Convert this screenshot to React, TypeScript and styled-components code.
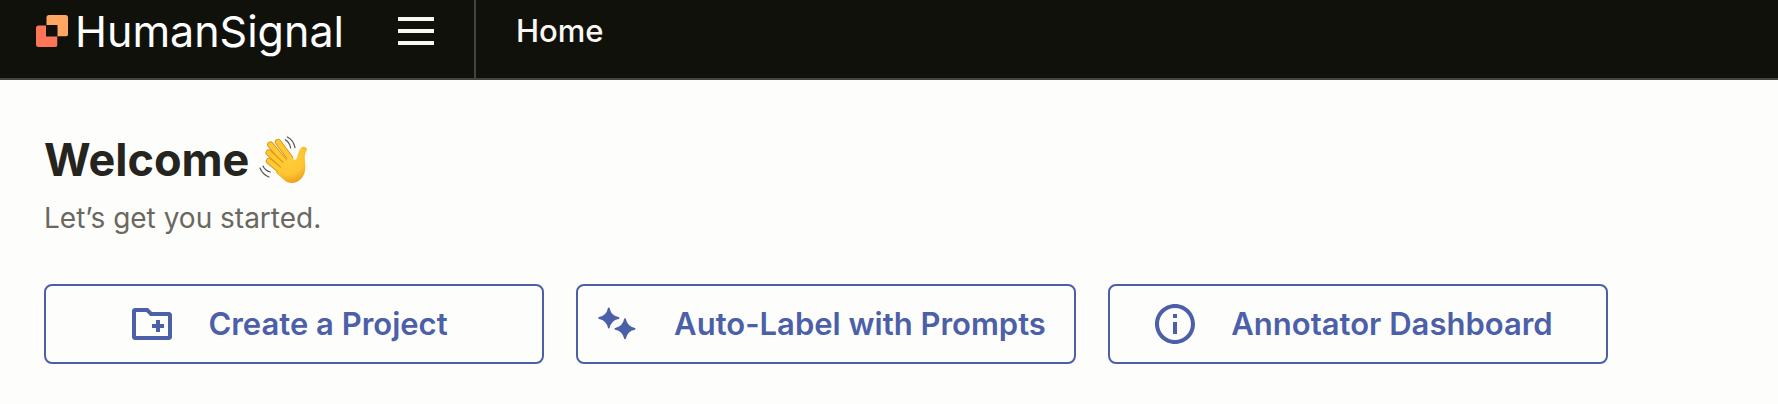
import React from "react";
import styled, { createGlobalStyle } from "styled-components";

const color = {
  ink: "#11110c",
  line: "#44433d",
  paper: "#fdfdfb",
  heading: "#25241f",
  muted: "#6a6860",
  accent: "#4c5fa9",
  light: "#faf8f5",
};

const GlobalStyle = createGlobalStyle`
  *, *::before, *::after { box-sizing: border-box; }
  html { background: ${color.paper}; }
  body {
    margin: 0;
    font-family: Inter, "Liberation Sans", sans-serif;
    -webkit-font-smoothing: antialiased;
  }
`;

const Header = styled.header`
  display: flex;
  align-items: stretch;
  background: ${color.ink};
  border-bottom: 2px solid ${color.line};
  color: ${color.light};
`;

const Brand = styled.div`
  display: flex;
  align-items: center;
  gap: 54px;
  padding: 0 40px 16px 36px;
  border-right: 2px solid ${color.line};
`;

const LogoLink = styled.a`
  display: flex;
  align-items: center;
  gap: 7px;
  color: #ffffff;
  text-decoration: none;
  font-size: 43px;
  line-height: 62px;
`;

const MenuButton = styled.button`
  display: flex;
  flex-direction: column;
  gap: 8px;
  width: 36px;
  padding: 0;
  border: 0;
  background: none;
  cursor: pointer;
`;

const MenuBar = styled.span`
  height: 4px;
  background: ${color.light};
`;

const Breadcrumb = styled.nav`
  display: flex;
  align-items: center;
  padding: 0 40px 16px;
`;

const BreadcrumbLink = styled.a`
  color: inherit;
  text-decoration: none;
  font-size: 31px;
  font-weight: 500;
  line-height: 40px;
`;

const Main = styled.main`
  padding: 52px 44px 40px;
`;

const Title = styled.h1`
  display: flex;
  align-items: center;
  gap: 10px;
  margin: 0;
  color: ${color.heading};
  font-size: 45px;
  font-weight: 700;
  line-height: 56px;
`;

const Subtitle = styled.p`
  margin: 12px 0 48px;
  color: ${color.muted};
  font-size: 28px;
  line-height: 36px;
`;

const Actions = styled.div`
  display: flex;
  gap: 32px;
`;

const ActionButton = styled.button`
  display: flex;
  flex: 0 1 500px;
  align-items: center;
  justify-content: center;
  gap: 32px;
  min-height: 80px;
  padding: 0 12px 0 0;
  border: 2px solid ${color.accent};
  border-radius: 8px;
  background: transparent;
  color: ${color.accent};
  font-family: inherit;
  font-size: 31px;
  font-weight: 600;
  line-height: 40px;
  white-space: nowrap;
  cursor: pointer;
`;

const ActionIcon = styled.svg.attrs({ viewBox: "0 0 24 24", "aria-hidden": true })`
  flex: none;
  width: 48px;
  height: 48px;
  fill: currentColor;
`;

const LogoMark = () => (
  <svg width="32" height="32" viewBox="0 0 32 32" aria-hidden="true">
    <rect x="10.5" width="21.5" height="21.5" rx="2.5" fill="#ffa663" />
    <rect y="10.5" width="21.5" height="21.5" rx="2.5" fill="#ff7557" />
    <path d="M10 21.5V10h11.5v11.5z" fill={color.ink} />
    <path d="M21.5 21.5H32V32H21.5z" fill={color.ink} />
  </svg>
);

const FolderPlusIcon = () => (
  <ActionIcon>
    <path d="M20.5 6H12l-2-2H3.5C2.67 4 2 4.67 2 5.5v13c0 .83.67 1.5 1.5 1.5h17c.83 0 1.5-.67 1.5-1.5v-11c0-.83-.67-1.5-1.5-1.5zM20 18H4V6h5.17l2 2H20v10zm-8-4h2v2h2v-2h2v-2h-2v-2h-2v2h-2z" />
  </ActionIcon>
);

const starPath = "M0-4.8Q.8-.8 4.8 0 .8.8 0 4.8-.8.8-4.8 0-.8-.8 0-4.8z";

const SparklesIcon = () => (
  <ActionIcon stroke="currentColor" strokeWidth="0.9" strokeLinejoin="round">
    <path transform="translate(7.4 9)" d={starPath} />
    <path transform="translate(15.5 14.4)" d={starPath} />
  </ActionIcon>
);

const InfoIcon = () => (
  <ActionIcon>
    <path d="M11 7h2v2h-2zm0 4h2v6h-2zm1-9C6.48 2 2 6.48 2 12s4.48 10 10 10 10-4.48 10-10S17.52 2 12 2zm0 18c-4.41 0-8-3.59-8-8s3.59-8 8-8 8 3.59 8 8-3.59 8-8 8z" />
  </ActionIcon>
);

const fingers = ["M84 47 120 95", "M61 55 106 108", "M56 79 100 120", "M57 104 100 140"];

const WavingHand = () => (
  <svg width="48" height="48" viewBox="27 29 144 144" role="img" aria-label="Waving hand">
    <defs>
      <radialGradient id="skin" gradientUnits="userSpaceOnUse" cx="112" cy="92" r="82">
        <stop offset="0" stopColor="#ffd03c" />
        <stop offset="0.65" stopColor="#fdc431" />
        <stop offset="1" stopColor="#ee9a1c" />
      </radialGradient>
    </defs>
    <g fill="none" strokeLinecap="round">
      {fingers.map((d) => (
        <g key={d}>
          <path d={d} stroke="#dd8f16" strokeWidth="19" />
          <path d={d} stroke="#ffc933" strokeWidth="14" />
        </g>
      ))}
    </g>
    <path
      d="M116 84C124 92 129 101 136 100 145 98 143 70 156 62 164 59 173 63 170 72 164 83 164 92 165 106 168 128 165 148 150 160 136 172 119 173 106 164L76 138 92 136 90 124 100 120 100 108 110 104z"
      fill="url(#skin)"
    />
    <g fill="none" stroke="#555550" strokeWidth="3.6" strokeLinecap="round">
      <path d="M106 40Q119 48 122 65" />
      <path d="M112 32Q131 42 135 64" />
      <path d="M39 119Q45 133 61 137" />
      <path d="M30 125Q38 145 57 152" />
    </g>
  </svg>
);

const actions = [
  { label: "Create a Project", Icon: FolderPlusIcon },
  { label: "Auto-Label with Prompts", Icon: SparklesIcon },
  { label: "Annotator Dashboard", Icon: InfoIcon },
];

export default function App() {
  return (
    <>
      <GlobalStyle />
      <Header>
        <Brand>
          <LogoLink href="#">
            <LogoMark />
            HumanSignal
          </LogoLink>
          <MenuButton type="button" aria-label="Open menu">
            <MenuBar />
            <MenuBar />
            <MenuBar />
          </MenuButton>
        </Brand>
        <Breadcrumb aria-label="Breadcrumb">
          <BreadcrumbLink href="#">Home</BreadcrumbLink>
        </Breadcrumb>
      </Header>
      <Main>
        <Title>
          Welcome
          <WavingHand />
        </Title>
        <Subtitle>Let’s get you started.</Subtitle>
        <Actions>
          {actions.map(({ label, Icon }) => (
            <ActionButton key={label} type="button">
              <Icon />
              {label}
            </ActionButton>
          ))}
        </Actions>
      </Main>
    </>
  );
}
